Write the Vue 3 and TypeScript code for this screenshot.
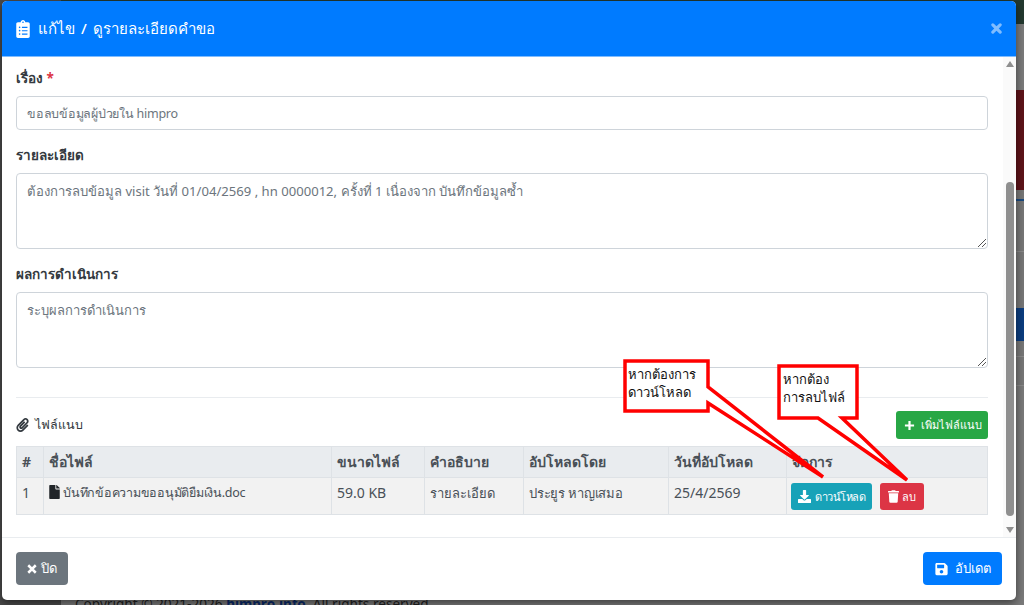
<script setup lang="ts">
interface FileRow {
  no: number
  name: string
  size: string
  desc: string
  by: string
  date: string
}

const rows: FileRow[] = [
  {
    no: 1,
    name: 'บันทึกข้อความขออนุมัติยืมเงิน.doc',
    size: '59.0 KB',
    desc: 'รายละเอียด',
    by: 'ประยูร หาญเสมอ',
    date: '25/4/2569',
  },
]
</script>

<template>
  <div class="page">
    <div class="backdrop">
      <div class="band band-green"></div>
      <div class="band band-grey1"></div>
      <div class="band band-red"></div>
      <div class="band band-grey2"></div>
      <div class="band band-blue"></div>
      <div class="band band-rest"></div>
    </div>
    <div class="sidebar-behind"></div>
    <div class="footer-behind">
      Copyright © 2021-2026 <b>himpro.info</b>. All rights reserved.
    </div>

    <div class="modal">
      <header class="modal-head">
        <h5 class="modal-title">
          <svg class="ico-title" viewBox="0 0 384 512" fill="#fff">
            <path d="M336 64h-80c0-35.300-28.700-64-64-64s-64 28.700-64 64H48C21.500 64 0 85.500 0 112v352c0 26.500 21.500 48 48 48h288c26.500 0 48-21.500 48-48V112c0-26.500-21.500-48-48-48zM96 424c-13.300 0-24-10.700-24-24s10.700-24 24-24 24 10.700 24 24-10.700 24-24 24zm0-96c-13.300 0-24-10.700-24-24s10.700-24 24-24 24 10.700 24 24-10.700 24-24 24zm0-96c-13.300 0-24-10.700-24-24s10.700-24 24-24 24 10.700 24 24-10.700 24-24 24zm96-192c13.300 0 24 10.700 24 24s-10.700 24-24 24-24-10.700-24-24 10.700-24 24-24zm128 368c0 4.400-3.600 8-8 8H168c-4.400 0-8-3.600-8-8v-16c0-4.400 3.600-8 8-8h144c4.400 0 8 3.600 8 8v16zm0-96c0 4.400-3.600 8-8 8H168c-4.400 0-8-3.600-8-8v-16c0-4.400 3.600-8 8-8h144c4.400 0 8 3.600 8 8v16zm0-96c0 4.400-3.600 8-8 8H168c-4.400 0-8-3.600-8-8v-16c0-4.400 3.600-8 8-8h144c4.400 0 8 3.600 8 8v16z" />
          </svg>
          แก้ไข / ดูรายละเอียดคำขอ
        </h5>
        <svg class="ico-close" viewBox="0 0 12 12">
          <path d="M2 2l8 8M10 2l-8 8" stroke="#fff" stroke-width="3.400" stroke-linecap="round" />
        </svg>
      </header>

      <div class="modal-main">
        <div class="modal-body">
          <div class="field">
            <label class="lbl">เรื่อง <span class="req">*</span></label>
            <div class="input">ขอลบข้อมูลผู้ป่วยใน himpro</div>
          </div>
          <div class="field">
            <label class="lbl">รายละเอียด</label>
            <div class="textarea detail">
              ต้องการลบข้อมูล visit วันที่ 01/04/2569 , hn 0000012, ครั้งที่ 1 เนื่องจาก บันทึกข้อมูลซ้ำ
              <svg class="grip" viewBox="0 0 8 8"><path d="M0 8L8 0M4 8l4-4" stroke="#555" stroke-width="1" /></svg>
            </div>
          </div>
          <div class="field">
            <label class="lbl">ผลการดำเนินการ</label>
            <div class="textarea">
              ระบุผลการดำเนินการ
              <svg class="grip" viewBox="0 0 8 8"><path d="M0 8L8 0M4 8l4-4" stroke="#555" stroke-width="1" /></svg>
            </div>
          </div>
          <hr class="divider" />
          <div class="attach-head">
            <span class="attach-title">
              <svg class="ico-clip" viewBox="0 0 448 512" fill="#343a40">
                <path d="M43.246 466.142c-58.430-60.289-57.341-157.511 1.386-217.581L254.392 34c44.316-45.332 116.351-45.336 160.671 0 43.890 44.894 43.943 117.329 0 162.276L232.214 383.128c-29.855 30.537-78.633 30.111-107.982-.998-28.275-29.970-27.368-77.473 1.452-106.953l143.743-146.835c6.182-6.314 16.312-6.422 22.626-.241l22.861 22.379c6.315 6.182 6.422 16.312.241 22.626L171.427 319.927c-4.932 5.045-5.236 13.428-.648 18.292 4.372 4.634 11.245 4.711 15.688.165l182.849-186.851c19.613-20.062 19.613-52.725-.011-72.798-19.189-19.627-49.957-19.637-69.154 0L90.390 293.295c-34.763 35.560-35.299 93.120-1.191 128.313 34.010 35.093 88.985 35.137 123.058.286l172.060-175.999c6.177-6.319 16.307-6.433 22.626-.256l22.877 22.364c6.319 6.177 6.434 16.307.256 22.626l-172.060 175.998c-59.576 60.938-155.943 60.216-214.770-.485z" />
              </svg>
              ไฟล์แนบ
            </span>
            <button class="btn btn-green btn-sm add">
              <svg class="ico-plus" viewBox="0 0 12 12"><path d="M6 1v10M1 6h10" stroke="#fff" stroke-width="2.400" /></svg>
              เพิ่มไฟล์แนบ
            </button>
          </div>
          <table class="files">
            <thead>
              <tr>
                <th class="c-no">#</th>
                <th class="c-name">ชื่อไฟล์</th>
                <th class="c-size">ขนาดไฟล์</th>
                <th class="c-desc">คำอธิบาย</th>
                <th class="c-by">อัปโหลดโดย</th>
                <th class="c-date">วันที่อัปโหลด</th>
                <th>จัดการ</th>
              </tr>
            </thead>
            <tbody>
              <tr v-for="r in rows" :key="r.no">
                <td>{{ r.no }}</td>
                <td class="t-name">
                  <svg class="ico-file" viewBox="0 0 384 512" fill="#212529">
                    <path d="M224 136V0H24C10.700 0 0 10.700 0 24v464c0 13.300 10.700 24 24 24h336c13.300 0 24-10.700 24-24V160H248c-13.200 0-24-10.800-24-24zm160-14.100v6.100H256V0h6.100c6.400 0 12.500 2.500 17 7l97.900 98c4.500 4.500 7 10.600 7 16.900z" />
                  </svg>
                  {{ r.name }}
                </td>
                <td>{{ r.size }}</td>
                <td class="t-thai">{{ r.desc }}</td>
                <td class="t-thai t-by">{{ r.by }}</td>
                <td>{{ r.date }}</td>
                <td class="t-actions">
                  <div class="actions">
                    <button class="btn btn-cyan btn-sm dl">
                      <svg class="ico-btn" viewBox="0 0 512 512" fill="#fff">
                        <path d="M216 0h80c13.300 0 24 10.700 24 24v168h87.700c17.800 0 26.700 21.500 14.100 34.100L269.700 378.300c-7.500 7.500-19.800 7.500-27.300 0L90.100 226.100c-12.600-12.600-3.700-34.100 14.100-34.100H192V24c0-13.300 10.700-24 24-24zm296 376v112c0 13.300-10.700 24-24 24H24c-13.300 0-24-10.700-24-24V376c0-13.300 10.700-24 24-24h146.700l49 49c20.100 20.100 52.500 20.100 72.600 0l49-49H488c13.300 0 24 10.700 24 24z" />
                      </svg>
                      ดาวน์โหลด
                    </button>
                    <button class="btn btn-red btn-sm del">
                      <svg class="ico-trash" viewBox="0 0 448 512" fill="#fff">
                        <path d="M432 32H312l-9.400-18.700A24 24 0 0 0 281.100 0H166.800a23.700 23.700 0 0 0-21.400 13.300L136 32H16A16 16 0 0 0 0 48v32a16 16 0 0 0 16 16h416a16 16 0 0 0 16-16V48a16 16 0 0 0-16-16zM53.200 467a48 48 0 0 0 47.900 45h245.800a48 48 0 0 0 47.900-45L416 128H32z" />
                      </svg>
                      ลบ
                    </button>
                  </div>
                </td>
              </tr>
            </tbody>
          </table>
        </div>
        <div class="scrollbar">
          <span class="arrow up"></span>
          <div class="track"><div class="thumb"></div></div>
          <span class="arrow down"></span>
        </div>
      </div>

      <footer class="modal-foot">
        <button class="btn btn-grey">
          <svg class="ico-x" viewBox="0 0 12 12"><path d="M1.500 1.500l9 9M10.500 1.500l-9 9" stroke="#fff" stroke-width="3" /></svg>
          ปิด
        </button>
        <button class="btn btn-blue">
          <svg class="ico-save" viewBox="0 0 448 512" fill="#fff">
            <path d="M433.900 129.900l-83.900-83.900A48 48 0 0 0 316.100 32H48C21.500 32 0 53.500 0 80v352c0 26.500 21.500 48 48 48h352c26.500 0 48-21.500 48-48V163.900a48 48 0 0 0-14.100-34zM224 416c-35.300 0-64-28.700-64-64 0-35.300 28.700-64 64-64s64 28.700 64 64c0 35.300-28.700 64-64 64zm96-304.500V212c0 6.600-5.400 12-12 12H76c-6.600 0-12-5.400-12-12V108c0-6.600 5.400-12 12-12h228.500c3.200 0 6.200 1.300 8.500 3.500l3.500 3.500A12 12 0 0 1 320 111.500z" />
          </svg>
          อัปเดต
        </button>
      </footer>

      <!-- red callouts drawn over the screenshot -->
      <svg class="callouts" viewBox="0 0 1024 605">
        <path d="M625 361H708V387L823 477L708 403V411H625Z" fill="#fff" stroke="#f00" stroke-width="3.500" />
        <path d="M779 366H857V418H842L907 480L818 418H779Z" fill="#fff" stroke="#f00" stroke-width="3.500" />
      </svg>
      <div class="note note-a">หากต้องการ<br />ดาวน์โหลด</div>
      <div class="note note-b">หากต้อง<br />การลบไฟล์</div>
    </div>
  </div>
</template>

<style>
html,
body {
  margin: 0;
  background: #3c3f42;
}
</style>

<style scoped>
.page {
  position: relative;
  width: 1024px;
  height: 605px;
  overflow: hidden;
  font-family: "Noto Sans", "DejaVu Sans", "Liberation Sans", sans-serif;
  font-size: 14px;
  color: #495057;
}
.backdrop {
  position: absolute;
  inset: 0;
  display: flex;
  flex-direction: column;
  background: #7a7a7a;
}
.band-green { height: 24px; background: #23392f; }
.band-grey1 { height: 66px; background: #7b7b7b; }
.band-red { height: 100px; background: #5e1319; }
.band-grey2 {
  height: 118px;
  background: linear-gradient(#777 0 9px, #1a4a80 9px 11px, #777 11px 61px, #8a8a8a 61px 62px, #777 62px);
}
.band-blue { height: 33px; background: #0b3d80; }
.band-rest {
  flex: 1;
  background: linear-gradient(#777 0 15px, #8a8a8a 15px 16px, #777 16px 44px, #8a8a8a 44px 45px, #7a7a7a 45px);
}
.sidebar-behind {
  position: absolute;
  left: 0;
  top: 0;
  bottom: 0;
  width: 61px;
  background: #4a4a4a;
}
.footer-behind {
  position: absolute;
  left: 75px;
  top: 594px;
  font-size: 13.600px;
  color: #222;
  white-space: nowrap;
}
.footer-behind b { color: #0a2a6a; }
.modal {
  position: absolute;
  left: 2px;
  top: 1px;
  width: 1014px;
  height: 599px;
  background: #fff;
  border-radius: 5px;
  box-shadow: 0 3px 9px rgba(0, 0, 0, 0.5);
  display: flex;
  flex-direction: column;
  overflow: hidden;
}
.modal-head {
  flex: none;
  height: 56px;
  background: #007bff;
  display: flex;
  align-items: center;
  justify-content: space-between;
  padding: 0 14px;
  border-bottom: 1px solid #7fbcff;
  box-sizing: border-box;
}
.modal-title {
  margin: 0;
  color: #fff;
  font-size: 15px;
  font-weight: 500;
  word-spacing: 2px;
  display: flex;
  align-items: center;
  gap: 8px;
}
.ico-title { width: 14px; height: 18px; }
.ico-close { width: 11px; height: 11px; opacity: 0.5; }
.modal-main {
  flex: 1;
  min-height: 0;
  display: flex;
}
.modal-body {
  flex: 1;
  padding: 11px 15px 0 14px;
  min-width: 0;
}
.field { margin-bottom: 15px; }
.lbl {
  display: block;
  font-weight: 700;
  font-size: 13.500px;
  line-height: 20px;
  color: #343a40;
  margin-bottom: 8px;
}
.req { color: #dc3545; }
.input,
.textarea {
  position: relative;
  box-sizing: border-box;
  border: 1px solid #ced4da;
  border-radius: 4px;
  padding: 6px 10px;
  font-size: 13px;
  line-height: 22px;
  color: #6c757d;
  background: #fff;
}
.input {
  height: 34px;
  font-size: 12.500px;
  letter-spacing: -0.25px;
}
.textarea { height: 76px; }
.detail { font-size: 13.100px; }
.grip {
  position: absolute;
  right: 1px;
  bottom: 1px;
  width: 8px;
  height: 8px;
}
.divider {
  border: 0;
  border-top: 1px solid #e9ecef;
  margin: 29px 0 13px;
}
.attach-head {
  display: flex;
  justify-content: space-between;
  align-items: center;
  margin-bottom: 7px;
}
.attach-title {
  display: flex;
  align-items: center;
  gap: 6px;
  color: #343a40;
  font-size: 12.500px;
}
.ico-clip { width: 13px; height: 14px; }
.files {
  width: 100%;
  border-collapse: collapse;
  table-layout: fixed;
  font-size: 14px;
  background: #f2f2f2;
}
.files th,
.files td {
  box-sizing: border-box;
  border: 1px solid #dee2e6;
  padding: 5px 4px 4px 5px;
  text-align: left;
  overflow: hidden;
  white-space: nowrap;
  line-height: 20px;
}
.files th {
  background: #e9ecef;
  color: #495057;
  font-weight: 700;
  height: 31px;
  padding-top: 4px;
}
.files td {
  height: 37px;
  vertical-align: top;
  color: #495057;
}
.t-name { font-size: 12.500px; letter-spacing: -0.25px; }
.t-thai { font-size: 13px; }
.t-by { letter-spacing: -0.2px; }
.c-no { width: 27px; }
.c-name { width: 288px; }
.c-size { width: 93px; }
.c-desc { width: 99px; }
.c-by { width: 145px; }
.c-date { width: 118px; }
.ico-file { width: 11px; height: 14px; vertical-align: -2px; }
.files .t-actions { padding-left: 4px; }
.actions { display: flex; gap: 8px; }
.btn {
  display: inline-flex;
  align-items: center;
  justify-content: center;
  border: 0;
  border-radius: 4px;
  color: #fff;
  font-family: inherit;
  font-size: 13px;
  padding: 0;
  height: 33px;
  gap: 4px;
}
.btn-sm {
  height: 27px;
  font-size: 11px;
  border-radius: 3px;
  justify-content: flex-start;
}
.add { height: 28px; padding: 0 6px 0 8px; gap: 6px; }
.dl { padding: 0 7px; gap: 4px; letter-spacing: -0.5px; }
.del { padding: 0 8px; gap: 3px; }
.btn-green { background: #28a745; }
.btn-cyan { background: #17a2b8; }
.btn-red { background: #dc3545; }
.btn-grey { background: #6c757d; width: 52px; }
.btn-blue { background: #007bff; width: 79px; gap: 7px; }
.ico-plus { width: 11px; height: 11px; }
.ico-btn { width: 13px; height: 13px; }
.ico-trash { width: 11px; height: 13px; }
.ico-x { width: 10px; height: 10px; }
.ico-save { width: 13px; height: 14px; }
.scrollbar {
  flex: none;
  width: 13px;
  background: #fafafa;
  display: flex;
  flex-direction: column;
  align-items: center;
}
.arrow {
  flex: none;
  width: 0;
  height: 0;
  border-left: 4.500px solid transparent;
  border-right: 4.500px solid transparent;
}
.arrow.up { border-bottom: 6px solid #8f8f8f; margin-top: 4px; }
.arrow.down { border-top: 6px solid #8f8f8f; margin: 11px 0 4px; }
.track {
  flex: 1;
  width: 8px;
  display: flex;
  flex-direction: column;
  justify-content: flex-end;
}
.thumb { height: 334px; background: #8f8f8f; border-radius: 4px; }
.modal-foot {
  flex: none;
  height: 63px;
  box-sizing: border-box;
  border-top: 1px solid #e9ecef;
  display: flex;
  justify-content: space-between;
  align-items: flex-start;
  padding: 14px 14px 0;
}
.callouts {
  position: absolute;
  left: -2px;
  top: -1px;
  width: 1024px;
  height: 605px;
  pointer-events: none;
}
.note {
  position: absolute;
  font-size: 13px;
  line-height: 18px;
  color: #111;
}
.note-a { left: 626px; top: 364px; }
.note-b { left: 781px; top: 369px; }
</style>
